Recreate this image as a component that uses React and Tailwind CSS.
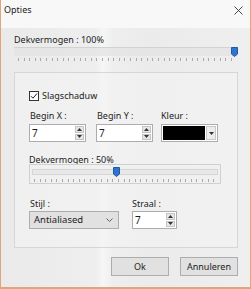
import React from "react";

function Spin({ width, value }) {
  return (
    <div className={`flex h-[18px] border border-[#abadb3] bg-white ${width}`}>
      <div className="flex-1 pl-[2px] leading-[16px] text-[10px]">{value}</div>
      <div className="flex flex-col w-[9px] my-[1px] mr-[1px] gap-[1px]">
        <div className="flex-1 flex items-center justify-center bg-[#e6e6e6] border border-[#c4c4c4]">
          <svg width="5" height="3" viewBox="0 0 5 3"><path d="M0 3 L2.5 0 L5 3 Z" fill="#333" /></svg>
        </div>
        <div className="flex-1 flex items-center justify-center bg-[#e6e6e6] border border-[#c4c4c4]">
          <svg width="5" height="3" viewBox="0 0 5 3"><path d="M0 0 L2.5 3 L5 0 Z" fill="#333" /></svg>
        </div>
      </div>
    </div>
  );
}

function Thumb() {
  return (
    <svg width="7" height="10" viewBox="0 0 7 10">
      <path d="M0.5 0.5 H6.5 V7 L3.5 9.5 L0.5 7 Z" fill="#2f74cf" stroke="#1d5aa8" strokeWidth="1" />
    </svg>
  );
}

export default function App() {
  return (
    <div className="w-[251px] h-[289px] overflow-hidden flex flex-col border-x border-b-2 border-[#e2a676] bg-[linear-gradient(90deg,#eaeaea_0%,#eeeeee_38%,#f6f6f6_41%,#eeeeee_45%,#ebebeb_60%,#efefef_100%)] font-['Noto_Sans',sans-serif] text-[9px] leading-[12px] text-[#1c1c1c]">
      {/* title bar */}
      <div className="h-[28px] shrink-0 flex items-start justify-between pl-[3px] pr-[7px] pt-[4px] bg-[#f8f8f8]">
        <span>Opties</span>
        <svg width="9" height="9" viewBox="0 0 9 9" className="mt-[2px]">
          <path d="M0.5 0.5 L8.5 8.5 M8.5 0.5 L0.5 8.5" stroke="#333" strokeWidth="0.9" />
        </svg>
      </div>

      <div className="flex flex-col pl-[13px] pr-[12px]">
        <div className="mt-[6px]">Dekvermogen : 100%</div>
        {/* slider 1 */}
        <div className="relative mt-[1px] h-[17px]">
          <div className="h-[9px] border-t border-[#d2d2d2] bg-[#e2e2e2]/70" />
          <div className="mt-[2px] mx-[4px] h-[3px] bg-[repeating-linear-gradient(90deg,#a9a9a9_0px,#a9a9a9_1px,transparent_1px,transparent_5.6px)]" />
          <div className="absolute right-[0px] top-[0px]">
            <Thumb />
          </div>
        </div>

        {/* group box */}
        <div className="mt-[8px] h-[176px] border border-[#d6d6d6] bg-[#f4f4f4]/60 pl-[14px] pt-[17px] flex flex-col">
          <div className="flex items-center gap-[3px]">
            <div className="w-[10px] h-[10px] border border-[#333] bg-white flex items-center justify-center">
              <svg width="8" height="8" viewBox="0 0 8 8">
                <path d="M1 4.2 L3 6.2 L7 1.5" stroke="#222" strokeWidth="1" fill="none" />
              </svg>
            </div>
            <span>Slagschaduw</span>
          </div>

          <div className="flex mt-[8px]">
            <div className="w-[67px] flex flex-col">
              <span className="pl-[1px]">Begin X :</span>
              <div className="mt-[2px]"><Spin width="w-[57px]" value="7" /></div>
            </div>
            <div className="w-[65px] flex flex-col">
              <span className="pl-[1px]">Begin Y :</span>
              <div className="mt-[2px]"><Spin width="w-[57px]" value="7" /></div>
            </div>
            <div className="flex flex-col">
              <span>Kleur :</span>
              <div className="mt-[2px] flex h-[18px] w-[57px] border border-[#abadb3] bg-white p-[1px]">
                <div className="w-[42px] bg-black" />
                <div className="flex-1 ml-[1px] flex items-center justify-center bg-[#ececec] border border-[#c8c8c8]">
                  <svg width="5" height="3" viewBox="0 0 5 3"><path d="M0 0 L2.5 3 L5 0 Z" fill="#333" /></svg>
                </div>
              </div>
            </div>
          </div>

          <div className="mt-[12px]">Dekvermogen : 50%</div>
          {/* slider 2 */}
          <div className="relative mt-[-2px] w-[192px] h-[20px] border border-[#d0d0d0] bg-[#f0f0f0]/70">
            <div className="mt-[4px] mx-[2px] h-[6px] border border-[#d6d6d6] bg-[#e8e8e8]" />
            <div className="mt-[4px] mx-[4px] h-[3px] bg-[repeating-linear-gradient(90deg,#a9a9a9_0px,#a9a9a9_1px,transparent_1px,transparent_5.6px)]" />
            <div className="absolute left-[83px] top-[2px]">
              <Thumb />
            </div>
          </div>

          <div className="flex mt-[14px]">
            <div className="w-[103px] flex flex-col">
              <span className="pl-[1px]">Stijl :</span>
              <div className="mt-[1px] flex items-center justify-between h-[18px] w-[90px] border border-[#adadad] bg-[#e1e1e1] pl-[4px] pr-[5px]">
                <span className="text-[9.5px]">Antialiased</span>
                <svg width="7" height="4" viewBox="0 0 7 4"><path d="M0.5 0.5 L3.5 3.5 L6.5 0.5" stroke="#555" strokeWidth="0.9" fill="none" /></svg>
              </div>
            </div>
            <div className="flex flex-col">
              <span>Straal :</span>
              <div className="mt-[1px]"><Spin width="w-[45px]" value="7" /></div>
            </div>
          </div>
        </div>

        {/* buttons */}
        <div className="mt-[9px] flex justify-end gap-[11px]">
          <div className="w-[58px] h-[19px] border border-[#adadad] bg-[#e1e1e1] flex items-center justify-center">Ok</div>
          <div className="w-[58px] h-[19px] border border-[#adadad] bg-[#e1e1e1] flex items-center justify-center">Annuleren</div>
        </div>
      </div>
    </div>
  );
}
